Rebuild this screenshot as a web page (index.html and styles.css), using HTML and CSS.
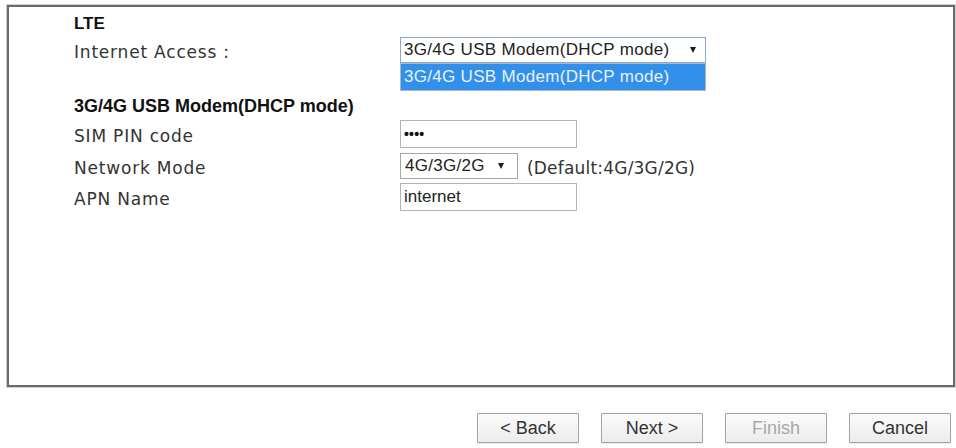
FILE: index.html
```html
<!DOCTYPE html>
<html>
<head>
<meta charset="utf-8">
<link rel="stylesheet" href="styles.css">
</head>
<body>
<div class="panel">
  <div class="title">LTE</div>
  <div class="row row-internet">
    <div class="label">Internet Access :</div>
    <div class="select select-wide focused">
      <span class="select-text">3G/4G USB Modem(DHCP mode)</span>
      <span class="arrow"></span>
      <div class="dropdown"><div class="option selected">3G/4G USB Modem(DHCP mode)</div></div>
    </div>
  </div>
  <div class="section">3G/4G USB Modem(DHCP mode)</div>
  <div class="row row-sim">
    <div class="label">SIM PIN code</div>
    <div class="input"><span class="dots">••••</span></div>
  </div>
  <div class="row row-mode">
    <div class="label">Network Mode</div>
    <div class="select select-small">
      <span class="select-text">4G/3G/2G</span>
      <span class="arrow"></span>
    </div>
    <span class="hint">(Default:4G/3G/2G)</span>
  </div>
  <div class="row row-apn">
    <div class="label">APN Name</div>
    <div class="input"><span class="value">internet</span></div>
  </div>
</div>
<div class="actions">
  <button class="btn">&lt; Back</button>
  <button class="btn">Next &gt;</button>
  <button class="btn disabled">Finish</button>
  <button class="btn">Cancel</button>
</div>
</body>
</html>
```
FILE: styles.css
```css
html, body {
  margin: 0;
  padding: 0;
  background: #ffffff;
}

body {
  width: 956px;
  height: 448px;
  overflow: hidden;
  font-family: "DejaVu Sans", Verdana, sans-serif;
  color: #2b2b2b;
}

.panel {
  box-sizing: border-box;
  margin: 5px 0 0 7px;
  width: 948px;
  height: 382px;
  border: 2px solid #6a6a6a;
  box-shadow: 0 0 0 1px #cfcfcf;
  padding: 6px 0 0 65px;
}

.title {
  font-family: "Liberation Sans", Arial, sans-serif;
  font-weight: bold;
  font-size: 17px;
  line-height: 22px;
  height: 22px;
  color: #111;
}

.row {
  display: flex;
  align-items: center;
}

.label {
  flex: 0 0 326px;
  font-size: 17px;
  line-height: 20px;
  letter-spacing: 0.8px;
  margin-top: 4px;
  color: #333;
}

.row-internet { margin-top: 2px; height: 26px; }
.row-sim { margin-top: 4px; height: 28px; }
.row-mode { margin-top: 5px; height: 26px; }
.row-apn { margin-top: 4px; height: 28px; }

.section {
  margin-top: 33px;
  font-family: "Liberation Sans", Arial, sans-serif;
  font-weight: bold;
  font-size: 18px;
  line-height: 20px;
  height: 20px;
  color: #111;
}

.select {
  position: relative;
  box-sizing: border-box;
  height: 26px;
  display: flex;
  align-items: center;
  border: 1px solid #a6a6a6;
  background: #fff;
  font-family: "Liberation Sans", Arial, sans-serif;
  font-size: 17px;
  letter-spacing: 0.3px;
  color: #222;
}

.select-wide {
  width: 306px;
  padding: 0 9px 0 3px;
}

.select-wide.focused {
  border-color: #8fa9cc;
}

.select-small {
  width: 118px;
  padding: 0 13px 0 4px;
}

.arrow {
  margin-left: auto;
  width: 0;
  height: 0;
  border-left: 3.5px solid transparent;
  border-right: 3.5px solid transparent;
  border-top: 6px solid #1e1e1e;
}

.dropdown {
  position: absolute;
  left: -1px;
  right: -1px;
  top: calc(100% + 1px);
  box-sizing: border-box;
  height: 28px;
  border: 1px solid #a9b8c8;
  background: #fff;
}

.option {
  height: 26px;
  line-height: 26px;
  padding-left: 3px;
  white-space: nowrap;
}

.option.selected {
  background: #3390ea;
  color: #e8f2ff;
}

.input {
  box-sizing: border-box;
  width: 177px;
  height: 28px;
  border: 1px solid #b3b3b3;
  background: #fff;
  display: flex;
  align-items: center;
  padding-left: 3px;
  font-family: "Liberation Sans", Arial, sans-serif;
  font-size: 17px;
  color: #222;
}

.dots {
  font-size: 14px;
  font-weight: bold;
  letter-spacing: 0.2px;
  color: #111;
}

.hint {
  margin-left: 9px;
  margin-top: 3px;
  font-size: 17px;
  letter-spacing: 0.2px;
  color: #333;
}

.actions {
  display: flex;
  justify-content: flex-end;
  gap: 22px;
  margin-top: 26px;
  padding-right: 5px;
}

.btn {
  box-sizing: border-box;
  width: 102px;
  height: 30px;
  border: 1px solid #a3a3a3;
  border-radius: 1px;
  background: linear-gradient(#fbfbfb, #ececec);
  box-shadow: 0 1px 1px rgba(0, 0, 0, 0.08);
  font-family: "Liberation Sans", Arial, sans-serif;
  font-size: 18px;
  color: #333;
  padding: 0;
}

.btn.disabled {
  color: #a8a8a8;
}
```
